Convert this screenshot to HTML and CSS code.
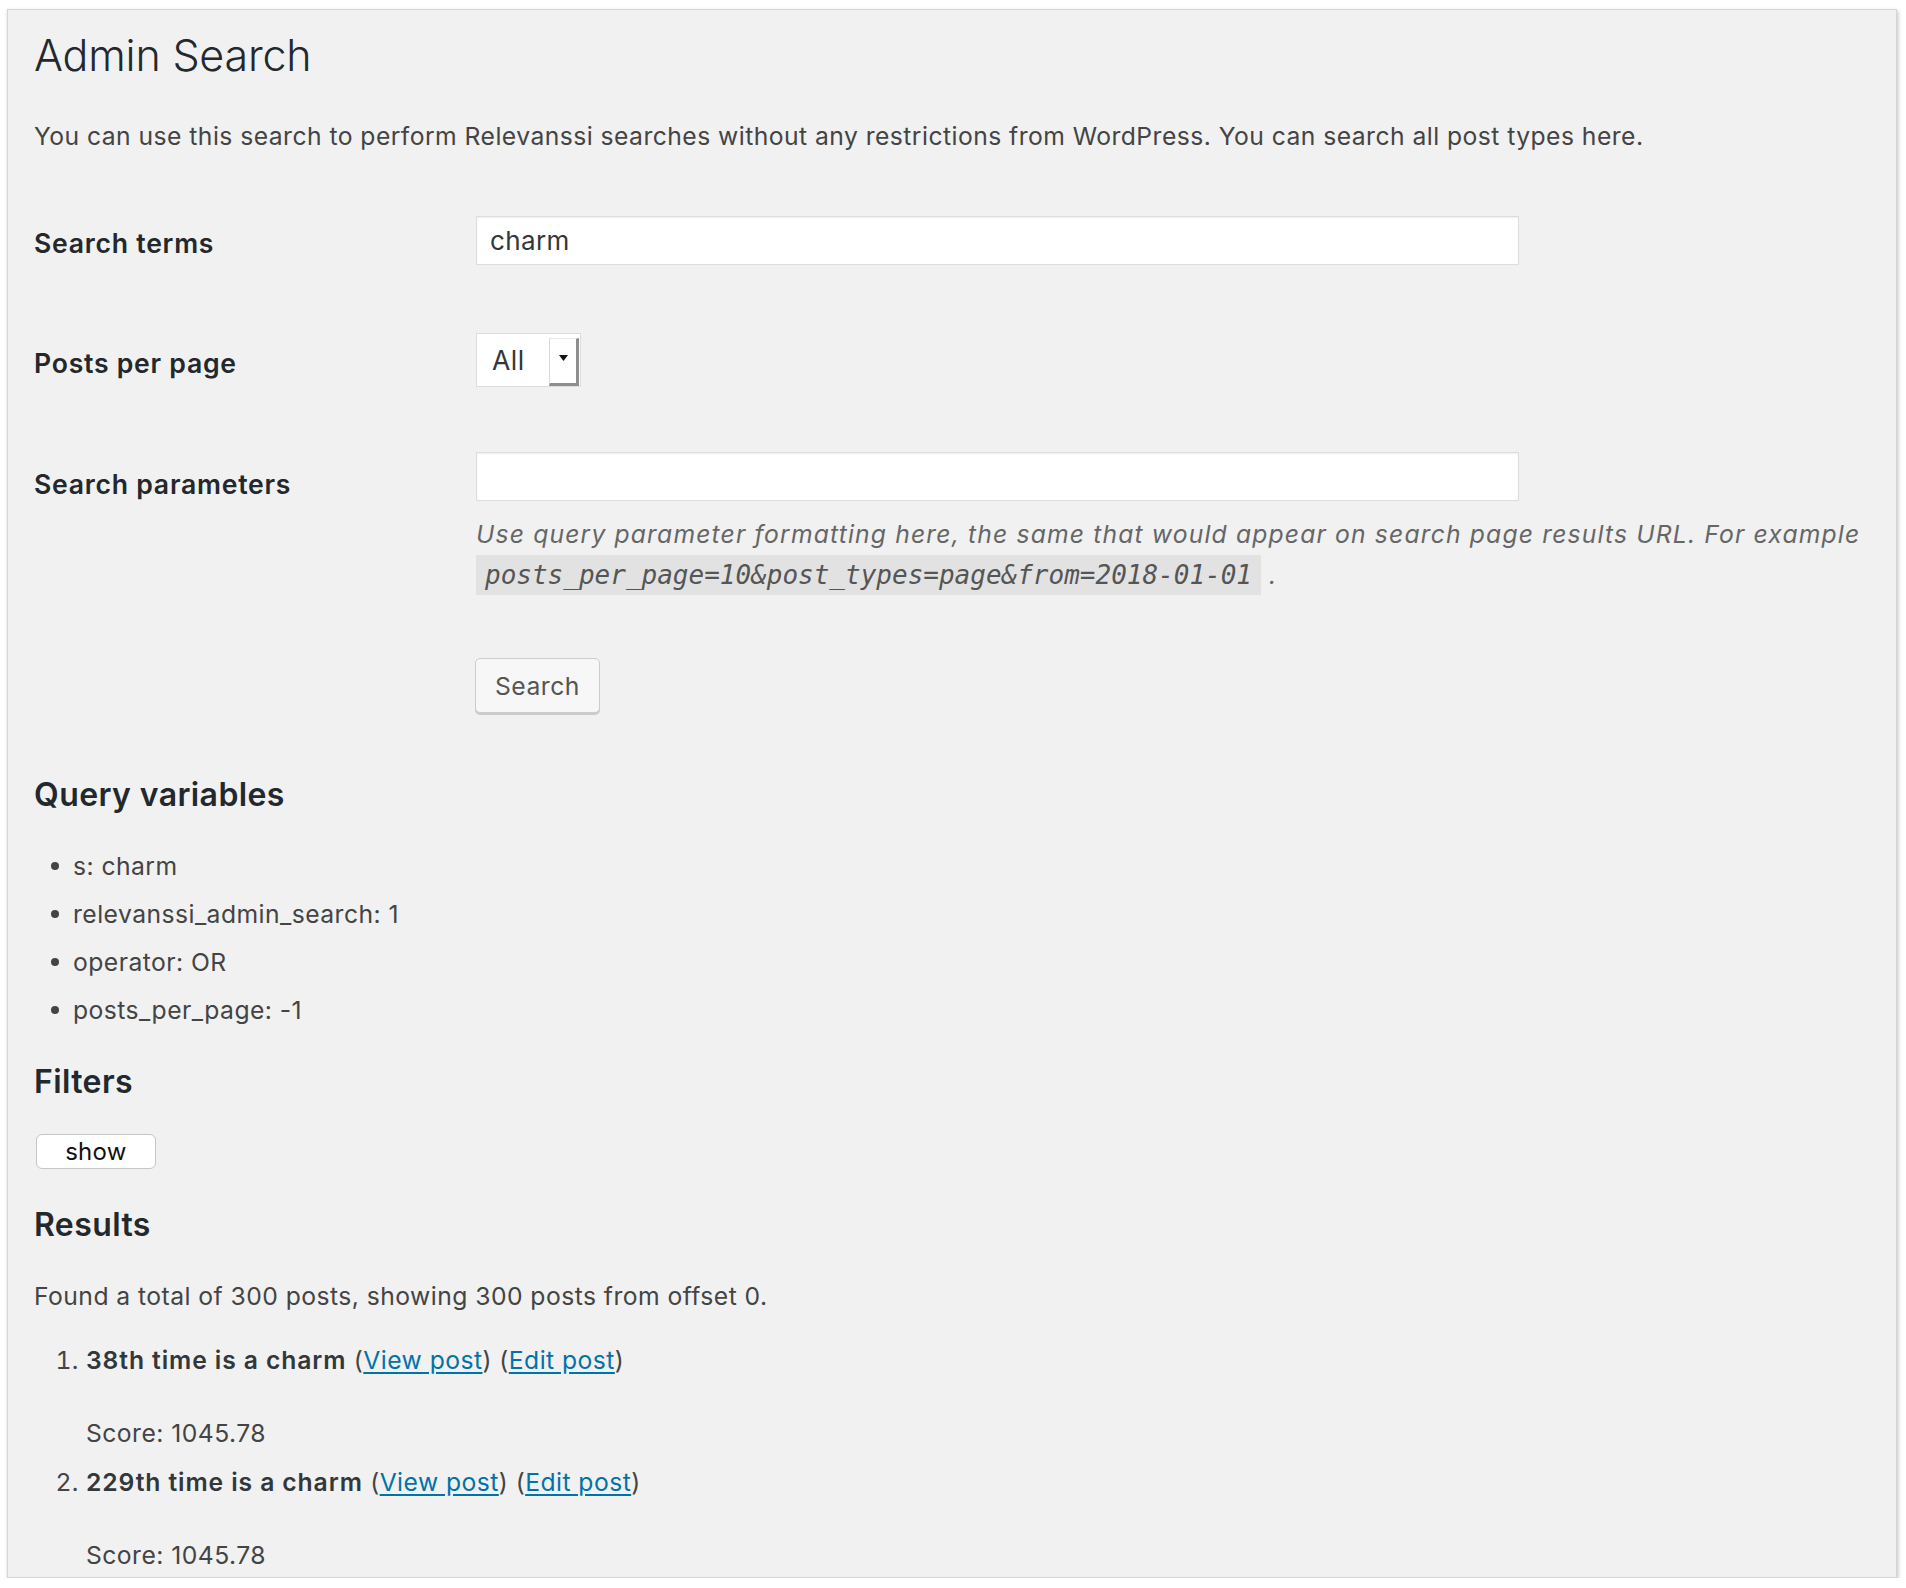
FILE: index.html
```html
<!DOCTYPE html>
<html lang="en">
<head>
    <meta charset="UTF-8">
    <meta name="viewport" content="width=device-width, initial-scale=1.0">
    <title>Admin Search</title>
    <link rel="stylesheet" href="styles.css">
</head>
<body>

<div class="wrap">
    <h1>Admin Search</h1>

    <p class="intro">You can use this search to perform Relevanssi searches without any restrictions from WordPress. You can search all post types here.</p>

    <form class="search-form" onsubmit="return false">
        <!-- Search terms -->
        <div class="form-row row-terms">
            <label for="s">Search terms</label>
            <div class="field">
                <input type="text" id="s" name="s" class="regular-text" value="charm">
            </div>
        </div>

        <!-- Posts per page -->
        <div class="form-row row-ppp">
            <label for="posts_per_page">Posts per page</label>
            <div class="field">
                <div class="select" id="posts_per_page">
                    <span class="select-value">All</span>
                    <span class="select-button">
                        <svg width="9" height="6" viewBox="0 0 9 6"><path d="M0 0h9L4.5 6z" fill="#111"/></svg>
                    </span>
                </div>
            </div>
        </div>

        <!-- Search parameters -->
        <div class="form-row row-params">
            <label for="args">Search parameters</label>
            <div class="field">
                <input type="text" id="args" name="args" class="regular-text">
                <p class="description">Use query parameter formatting here, the same that would appear on search page results URL. For example <code>posts_per_page=10&amp;post_types=page&amp;from=2018-01-01</code> .</p>
            </div>
        </div>

        <div class="submit">
            <button type="submit" class="button">Search</button>
        </div>
    </form>

    <h2>Query variables</h2>
    <ul class="query-vars">
        <li>s: charm</li>
        <li>relevanssi_admin_search: 1</li>
        <li>operator: OR</li>
        <li>posts_per_page: -1</li>
    </ul>

    <h2 class="filters-title">Filters</h2>
    <button type="button" class="toggle">show</button>

    <h2 class="results-title">Results</h2>
    <p class="found">Found a total of 300 posts, showing 300 posts from offset 0.</p>

    <ol class="results">
        <li>
            <strong>38th time is a charm</strong> (<a href="#">View post</a>) (<a href="#">Edit post</a>)
            <div class="score">Score: 1045.78</div>
        </li>
        <li>
            <strong>229th time is a charm</strong> (<a href="#">View post</a>) (<a href="#">Edit post</a>)
            <div class="score">Score: 1045.78</div>
        </li>
    </ol>
</div>

</body>
</html>
```

FILE: styles.css
```css
* {
    box-sizing: border-box;
    margin: 0;
    padding: 0;
}

body {
    background: #fff;
    font-family: Inter, "Liberation Sans", sans-serif;
    font-size: 24.7px;
    line-height: 36px;
    letter-spacing: 0.45px;
    color: #444;
}

.wrap {
    margin: 9px 0 0 7px;
    width: 1890px;
    height: 1569px;
    overflow: hidden;
    padding: 17px 26px 0;
    background: #f1f1f1;
    border: 1px solid #d6d6d6;
    box-shadow: 1px 2px 4px rgba(0, 0, 0, 0.25);
}

h1 {
    font-size: 43px;
    font-weight: 300;
    line-height: 57px;
    color: #23282d;
    letter-spacing: -0.2px;
}

h2 {
    font-size: 32px;
    font-weight: 600;
    line-height: 42px;
    color: #23282d;
    letter-spacing: 0.4px;
    margin-top: 61px;
}

.intro {
    margin-top: 34px;
    line-height: 37px;
}

/* form table */
.form-row {
    display: grid;
    grid-template-columns: 442px 1fr;
    align-items: start;
}

.form-row label {
    font-size: 26.6px;
    font-weight: 600;
    line-height: 34px;
    letter-spacing: 0.75px;
    color: #23282d;
}

.row-terms { margin-top: 61px; }
.row-terms label { padding-top: 10px; }

.row-ppp { margin-top: 68px; }
.row-ppp label { padding-top: 13px; }

.row-params { margin-top: 65px; }
.row-params label { padding-top: 15px; }

.regular-text {
    display: block;
    width: 1043px;
    height: 49px;
    padding: 0 13px;
    font-family: inherit;
    font-size: 26px;
    letter-spacing: 0.4px;
    color: #32373c;
    background: #fff;
    border: 1px solid #ddd;
    box-shadow: inset 0 1px 2px rgba(0, 0, 0, 0.07);
    outline: none;
}

.select {
    display: flex;
    width: 105px;
    height: 54px;
    background: #fff;
    border: 1px solid #ddd;
    padding: 4px 0 0 0;
}

.select-value {
    flex: 1;
    padding: 0 0 0 15px;
    font-size: 26.6px;
    line-height: 44px;
    color: #32373c;
}

.select-button {
    width: 30px;
    display: flex;
    align-items: center;
    justify-content: center;
    padding-bottom: 6px;
    background: #fff;
    border-left: 1px solid #d8d8d8;
    border-top: 1px solid #e6e6e6;
    border-right: 3px solid #8e8e8e;
    border-bottom: 3px solid #8e8e8e;
    margin-right: 1px;
}

.description {
    margin-top: 13px;
    font-style: italic;
    line-height: 41px;
    letter-spacing: 1.15px;
    color: #666;
}

code {
    font-family: "DejaVu Sans Mono", "Liberation Mono", monospace;
    font-size: 26px;
    font-style: italic;
    letter-spacing: 0;
    padding: 5px 9px;
    background: #e2e2e2;
    color: #555;
}

.submit {
    margin-top: 62px;
    padding-left: 441px;
}

.button {
    height: 55px;
    width: 125px;
    font-family: inherit;
    font-size: 24.7px;
    letter-spacing: 0.5px;
    color: #555;
    background: #f7f7f7;
    border: 1px solid #ccc;
    border-radius: 5px;
    box-shadow: 0 2px 0 #ccc;
    cursor: pointer;
}

/* query variables */
.query-vars {
    list-style: none;
    margin: 32px 0 0 17px;
}

.query-vars li {
    display: flex;
    align-items: center;
    gap: 14px;
    margin-bottom: 12px;
}

.query-vars li:last-child {
    margin-bottom: 0;
}

.query-vars li::before {
    content: "";
    width: 8px;
    height: 8px;
    border-radius: 50%;
    background: #444;
}

.filters-title {
    margin-top: 33px;
}

.toggle {
    display: block;
    margin: 31px 0 0 2px;
    width: 120px;
    height: 35px;
    font-family: inherit;
    font-size: 24px;
    letter-spacing: 0.3px;
    color: #111;
    background: #fff;
    border: 1px solid #c6c6c6;
    border-radius: 6px;
    cursor: pointer;
}

.results-title {
    margin-top: 35px;
}

.found {
    margin-top: 32px;
}

/* result list */
.results {
    margin-top: 28px;
    padding-left: 52px;
}

.results li {
    margin-bottom: 13px;
}

.results strong {
    font-weight: 600;
    letter-spacing: 0.9px;
    color: #32373c;
}

.results a {
    color: #0073aa;
    text-decoration: underline;
    text-underline-offset: 3px;
}

.score {
    margin-top: 37px;
}
```
